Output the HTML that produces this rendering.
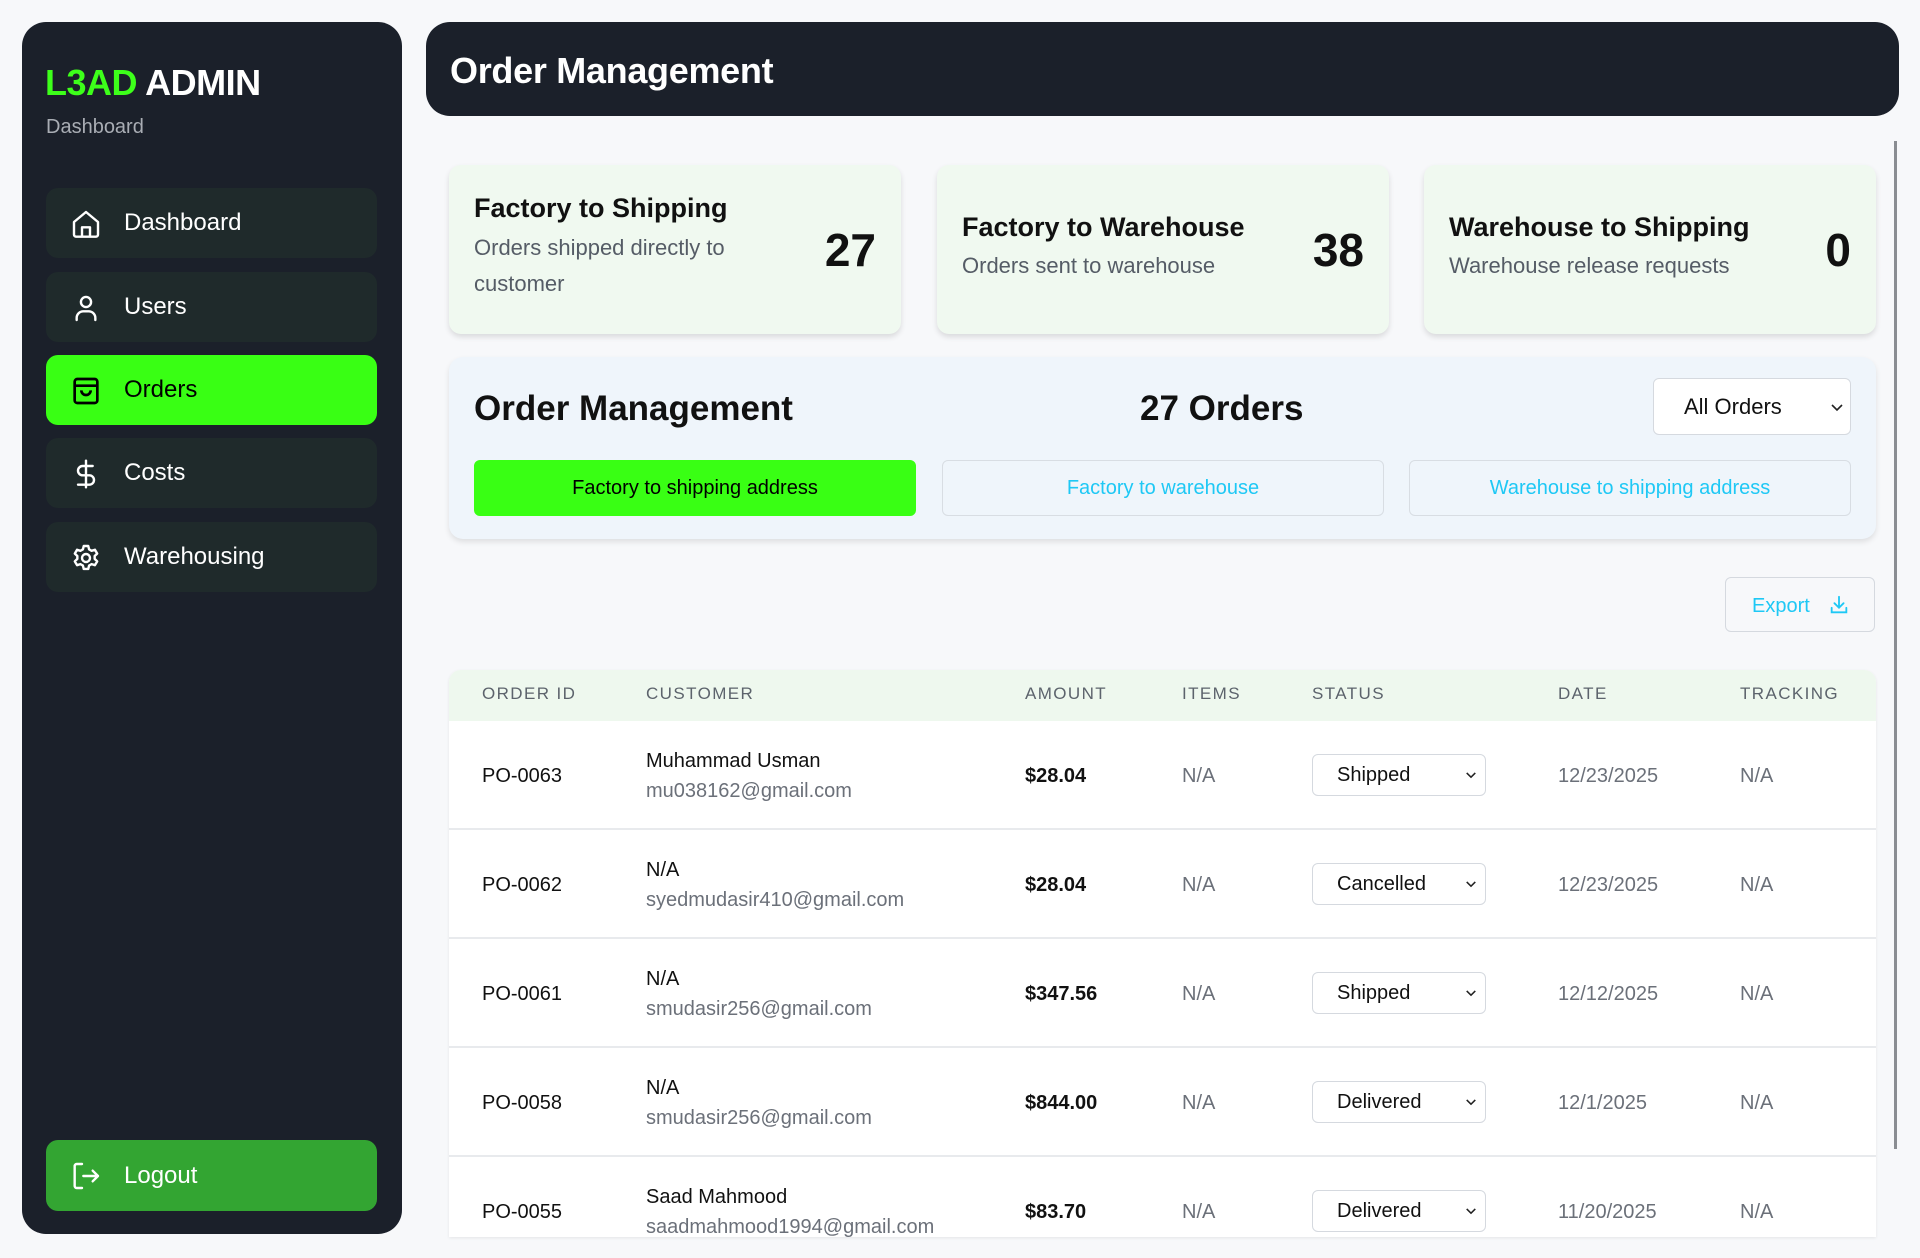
<!DOCTYPE html>
<html><head><meta charset="utf-8"><style>
*{box-sizing:border-box;margin:0;padding:0}
body{width:1920px;height:1258px;background:#f7f8fa;font-family:"Liberation Sans",Arial,sans-serif;position:relative;overflow:hidden;color:#111}
.abs{position:absolute}
.side{left:22px;top:22px;width:380px;height:1212px;background:#1b202a;border-radius:24px}
.logo{left:45px;top:62px;font-size:36px;font-weight:bold;color:#fff;letter-spacing:-0.5px}
.logo span{color:#3dff1a}
.sub{left:46px;top:116px;font-size:20px;color:#a9adb4}
.nav{left:46px;width:331px;height:70px;background:#1f2a2b;border-radius:12px;color:#fff;font-size:24px;display:flex;align-items:center}
.nav svg{position:absolute;left:24px;top:20px}
.nav .t{position:absolute;left:78px}
.nav.act{background:#39ff14;color:#000}
.logout{background:#33a532}
.header{left:426px;top:22px;width:1473px;height:94px;background:#1b202a;border-radius:24px;color:#fff;font-size:36px;font-weight:bold;padding:28px 0 0 24px;letter-spacing:-0.3px}
.card{top:165px;width:452px;height:169px;background:#f0f9f0;border-radius:12px;box-shadow:0 3px 6px rgba(0,0,0,.12)}
.card .ti{position:absolute;left:25px;font-size:27px;font-weight:bold}
.card .de{position:absolute;left:25px;font-size:22px;color:#555c66;line-height:36px}
.card .n{position:absolute;right:25px;top:58px;font-size:46px;font-weight:bold}
.panel{left:449px;top:357px;width:1427px;height:182px;background:#eff5fb;border-radius:14px;box-shadow:0 3px 6px rgba(0,0,0,.1)}
.tab{top:460px;width:442px;height:56px;border-radius:6px;border:1px solid #d8dde3;background:#eff5fb;color:#1ec8f5;font-size:20px;display:flex;align-items:center;justify-content:center}
.tab.on{background:#39ff14;border-color:#39ff14;color:#000}
.sel{background:#fff;border:1px solid #d5d9df;border-radius:6px;display:flex;align-items:center;font-size:20px;color:#111}
.tbl{left:449px;top:670px;width:1427px;height:567px;background:#fff;border-radius:12px 12px 0 0;overflow:hidden;box-shadow:0 1px 3px rgba(0,0,0,.08)}
.th{position:absolute;top:0;left:0;width:1427px;height:51px;background:#eef8ee}
.th div{position:absolute;top:14px;font-size:17px;color:#5c636c;letter-spacing:1.4px}
.row{position:absolute;left:0;width:1427px;height:109px;border-bottom:2px solid #e8eaed}
.row div{position:absolute;font-size:20px}
.g{color:#6b7079}
</style></head><body>
<div class="abs side"></div>
<div class="abs logo"><span>L3AD</span> ADMIN</div>
<div class="abs sub">Dashboard</div>

<div class="abs nav" style="top:188px"><svg width="32" height="32" viewBox="0 0 24 24" fill="none" stroke="#fff" stroke-width="1.8" stroke-linejoin="round"><path d="M3 10.5 12 3l9 7.5V20a1.5 1.5 0 0 1-1.5 1.5h-15A1.5 1.5 0 0 1 3 20z"/><path d="M9 21.5v-7h6v7"/></svg><span class="t">Dashboard</span></div>
<div class="abs nav" style="top:272px"><svg width="32" height="32" viewBox="0 0 24 24" fill="none" stroke="#fff" stroke-width="1.8" stroke-linecap="round"><circle cx="12" cy="7.5" r="3.8"/><path d="M5 21v-1.5a5 5 0 0 1 5-5h4a5 5 0 0 1 5 5V21"/></svg><span class="t">Users</span></div>
<div class="abs nav act" style="top:355px"><svg width="32" height="32" viewBox="0 0 24 24" fill="none" stroke="#000" stroke-width="2" stroke-linejoin="round"><rect x="3.5" y="3" width="17" height="18" rx="2"/><path d="M3.5 8h17"/><path d="M8.5 11.5a3.5 3.5 0 0 0 7 0"/></svg><span class="t">Orders</span></div>
<div class="abs nav" style="top:438px"><svg width="32" height="32" viewBox="0 0 24 24" fill="none" stroke="#fff" stroke-width="1.8" stroke-linecap="round"><path d="M12 2v20"/><path d="M17 6H9.5a3.5 3.5 0 0 0 0 7h5a3.5 3.5 0 0 1 0 7H6"/></svg><span class="t">Costs</span></div>
<div class="abs nav" style="top:522px"><svg width="32" height="32" viewBox="0 0 24 24" fill="none" stroke="#fff" stroke-width="1.8" stroke-linejoin="round"><path d="M10.3 3h3.4l.6 2.5 1.9 1.1 2.5-.8 1.7 2.9-1.9 1.8v2.2l1.9 1.8-1.7 2.9-2.5-.8-1.9 1.1-.6 2.5h-3.4l-.6-2.5-1.9-1.1-2.5.8-1.7-2.9 1.9-1.8v-2.2L3.6 8.7l1.7-2.9 2.5.8 1.9-1.1z"/><circle cx="12" cy="12" r="3"/></svg><span class="t">Warehousing</span></div>
<div class="abs nav logout" style="top:1140px;height:71px"><svg width="32" height="32" viewBox="0 0 24 24" fill="none" stroke="#fff" stroke-width="1.8" stroke-linecap="round" stroke-linejoin="round"><path d="M9 3H5a1.5 1.5 0 0 0-1.5 1.5v15A1.5 1.5 0 0 0 5 21h4"/><path d="M10 12h11M17 8l4 4-4 4"/></svg><span class="t">Logout</span></div>

<div class="abs header">Order Management</div>
<div class="abs" style="left:1894px;top:141px;width:3px;height:1008px;background:#8a8d92"></div>

<div class="abs card" style="left:449px"><div class="ti" style="top:28px">Factory to Shipping</div><div class="de" style="top:65px">Orders shipped directly to<br>customer</div><div class="n">27</div></div>
<div class="abs card" style="left:937px"><div class="ti" style="top:47px">Factory to Warehouse</div><div class="de" style="top:83px">Orders sent to warehouse</div><div class="n">38</div></div>
<div class="abs card" style="left:1424px"><div class="ti" style="top:47px">Warehouse to Shipping</div><div class="de" style="top:83px">Warehouse release requests</div><div class="n">0</div></div>

<div class="abs panel"></div>
<div class="abs" style="left:474px;top:389px;font-size:35px;font-weight:bold">Order Management</div>
<div class="abs" style="left:1140px;top:389px;font-size:35px;font-weight:bold">27 Orders</div>
<div class="abs sel" style="left:1653px;top:378px;width:198px;height:57px;padding-left:30px;font-size:22px">All Orders<svg class="abs" style="right:6px;top:24px" width="14" height="10" viewBox="0 0 14 10"><path d="M2 2l5 5 5-5" fill="none" stroke="#222" stroke-width="1.6"/></svg></div>
<div class="abs tab on" style="left:474px">Factory to shipping address</div>
<div class="abs tab" style="left:942px">Factory to warehouse</div>
<div class="abs tab" style="left:1409px">Warehouse to shipping address</div>

<div class="abs" style="left:1725px;top:577px;width:150px;height:55px;border:1px solid #d5d9df;border-radius:6px;background:#f7f8fa;color:#1ec8f5;font-size:20px;padding:17px 0 0 26px">Export<svg class="abs" style="left:102px;top:16px" width="22" height="22" viewBox="0 0 24 24" fill="none" stroke="#1ec8f5" stroke-width="2" stroke-linecap="round"><path d="M12 3v12M7 10l5 5 5-5M4 15v5h16v-5"/></svg></div>

<div class="abs tbl">
<div class="th"><div style="left:33px">ORDER ID</div><div style="left:197px">CUSTOMER</div><div style="left:576px">AMOUNT</div><div style="left:733px">ITEMS</div><div style="left:863px">STATUS</div><div style="left:1109px">DATE</div><div style="left:1291px">TRACKING</div></div>

<div class="row" style="top:51px"><div style="left:33px;top:44px">PO-0063</div><div style="left:197px;top:29px">Muhammad Usman</div><div class="g" style="left:197px;top:59px">mu038162@gmail.com</div><div style="left:576px;top:44px;font-weight:bold">$28.04</div><div class="g" style="left:733px;top:44px">N/A</div><div class="sel" style="left:863px;top:33px;width:174px;height:42px;padding-left:24px">Shipped<svg class="abs" style="right:8px;top:16px" width="12" height="9" viewBox="0 0 14 10"><path d="M2 2l5 5 5-5" fill="none" stroke="#222" stroke-width="1.8"/></svg></div><div class="g" style="left:1109px;top:44px">12/23/2025</div><div class="g" style="left:1291px;top:44px">N/A</div></div>

<div class="row" style="top:160px"><div style="left:33px;top:44px">PO-0062</div><div style="left:197px;top:29px">N/A</div><div class="g" style="left:197px;top:59px">syedmudasir410@gmail.com</div><div style="left:576px;top:44px;font-weight:bold">$28.04</div><div class="g" style="left:733px;top:44px">N/A</div><div class="sel" style="left:863px;top:33px;width:174px;height:42px;padding-left:24px">Cancelled<svg class="abs" style="right:8px;top:16px" width="12" height="9" viewBox="0 0 14 10"><path d="M2 2l5 5 5-5" fill="none" stroke="#222" stroke-width="1.8"/></svg></div><div class="g" style="left:1109px;top:44px">12/23/2025</div><div class="g" style="left:1291px;top:44px">N/A</div></div>

<div class="row" style="top:269px"><div style="left:33px;top:44px">PO-0061</div><div style="left:197px;top:29px">N/A</div><div class="g" style="left:197px;top:59px">smudasir256@gmail.com</div><div style="left:576px;top:44px;font-weight:bold">$347.56</div><div class="g" style="left:733px;top:44px">N/A</div><div class="sel" style="left:863px;top:33px;width:174px;height:42px;padding-left:24px">Shipped<svg class="abs" style="right:8px;top:16px" width="12" height="9" viewBox="0 0 14 10"><path d="M2 2l5 5 5-5" fill="none" stroke="#222" stroke-width="1.8"/></svg></div><div class="g" style="left:1109px;top:44px">12/12/2025</div><div class="g" style="left:1291px;top:44px">N/A</div></div>

<div class="row" style="top:378px"><div style="left:33px;top:44px">PO-0058</div><div style="left:197px;top:29px">N/A</div><div class="g" style="left:197px;top:59px">smudasir256@gmail.com</div><div style="left:576px;top:44px;font-weight:bold">$844.00</div><div class="g" style="left:733px;top:44px">N/A</div><div class="sel" style="left:863px;top:33px;width:174px;height:42px;padding-left:24px">Delivered<svg class="abs" style="right:8px;top:16px" width="12" height="9" viewBox="0 0 14 10"><path d="M2 2l5 5 5-5" fill="none" stroke="#222" stroke-width="1.8"/></svg></div><div class="g" style="left:1109px;top:44px">12/1/2025</div><div class="g" style="left:1291px;top:44px">N/A</div></div>

<div class="row" style="top:487px;border:none"><div style="left:33px;top:44px">PO-0055</div><div style="left:197px;top:29px">Saad Mahmood</div><div class="g" style="left:197px;top:59px">saadmahmood1994@gmail.com</div><div style="left:576px;top:44px;font-weight:bold">$83.70</div><div class="g" style="left:733px;top:44px">N/A</div><div class="sel" style="left:863px;top:33px;width:174px;height:42px;padding-left:24px">Delivered<svg class="abs" style="right:8px;top:16px" width="12" height="9" viewBox="0 0 14 10"><path d="M2 2l5 5 5-5" fill="none" stroke="#222" stroke-width="1.8"/></svg></div><div class="g" style="left:1109px;top:44px">11/20/2025</div><div class="g" style="left:1291px;top:44px">N/A</div></div>
</div>
</body></html>
